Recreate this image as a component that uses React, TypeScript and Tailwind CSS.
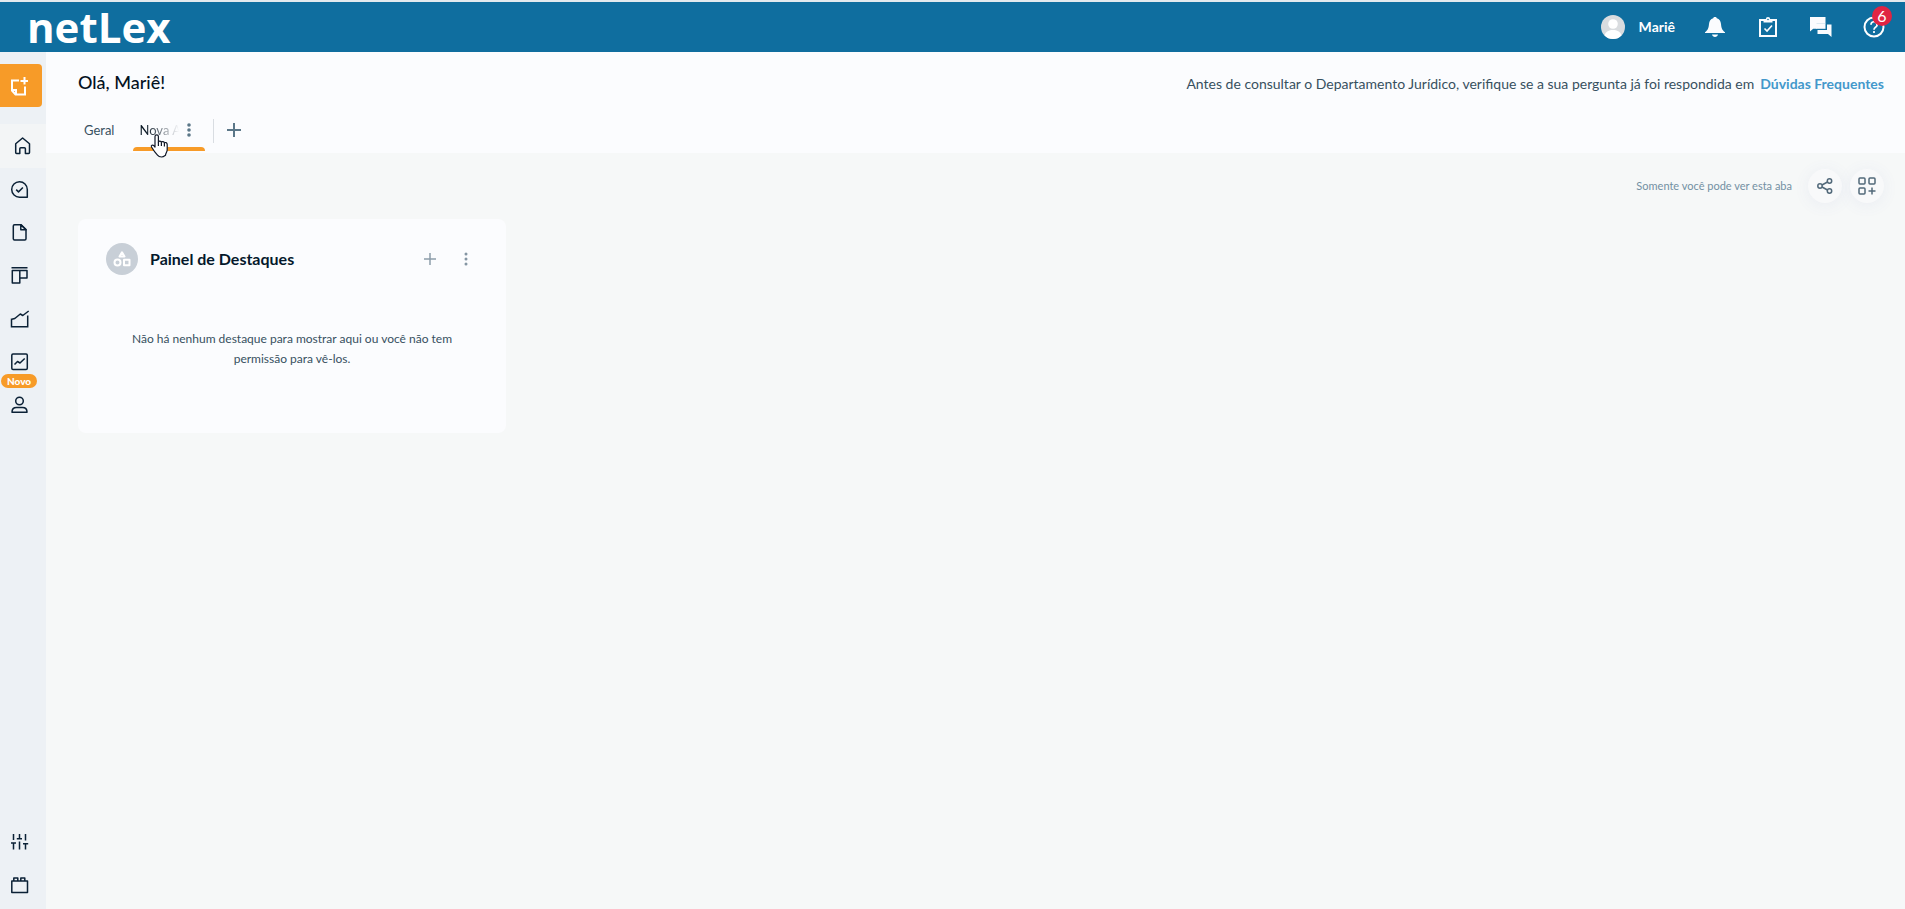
import React from "react";

type IconProps = { className?: string; children: React.ReactNode; size?: number; box?: number; sw?: number };

function Line({ className = "", children, size = 20, box, sw = 1.5 }: IconProps) {
  const b = box ?? size;
  return (
    <svg
      width={size}
      height={size}
      viewBox={`0 0 ${b} ${b}`}
      fill="none"
      stroke="currentColor"
      strokeWidth={sw}
      strokeLinejoin="round"
      className={"shrink-0 " + className}
      aria-hidden="true"
    >
      {children}
    </svg>
  );
}

function NavItem({ label, children, badge }: { label: string; children: React.ReactNode; badge?: string }) {
  return (
    <a href="#" aria-label={label} className="relative flex h-[43px] items-center pl-[10px] text-[#0b2136]">
      {children}
      {badge && (
        <span className="absolute top-[34px] left-px z-10 rounded-full bg-[#f79b28] px-1.5 text-[10px] leading-[14px] font-black text-white">
          {badge}
        </span>
      )}
    </a>
  );
}

function Sidebar() {
  return (
    <nav className="flex w-[46px] shrink-0 flex-col bg-[#edf1f5] pt-3 pb-[3px]">
      <button aria-label="Novo documento" className="flex h-[43px] w-[42px] items-center rounded-r-sm bg-[#f79b28] pl-[10px] text-white">
        <Line sw={2}>
          <path d="M9 4.500H2v10l3.500 4H15v-8M2 14h4v4.500" strokeLinejoin="miter" />
          <path d="M14.500 1v7.500M10.500 5h7.500" />
        </Line>
      </button>
      <a href="#" aria-label="Início" className="mt-[17px] flex h-11 items-center bg-[#f3f5f6] pl-[13px] text-[#0b2136]">
        <Line>
          <path d="M2.700 7.800 9.600 2l6.900 5.800v8.700a.9.900 0 0 1-.9.900h-3.200v-4.600a1 1 0 0 0-1-1H7.800a1 1 0 0 0-1 1v4.600H3.600a.9.900 0 0 1-.9-.9z" />
        </Line>
      </a>
      <NavItem label="Tarefas">
        <Line>
          <path d="M17.300 9.500v7.800H9.600A7.800 7.800 0 1 1 17.300 9.500z" />
          <path d="m6.200 9.600 2.300 2.300 4.400-4.400" />
        </Line>
      </NavItem>
      <NavItem label="Documentos">
        <Line>
          <path d="M11.200 1.800H4.500a1.200 1.200 0 0 0-1.200 1.200v12.800a1.200 1.200 0 0 0 1.200 1.200h10.300a1.200 1.200 0 0 0 1.200-1.200V6.600z" />
          <path d="M10.800 1.800v5H16z" />
        </Line>
      </NavItem>
      <NavItem label="Quadros">
        <Line>
          <path d="M1.500 1.800h16M2.300 4.600h7.500v12.500H2.300zM9.800 4.600h7.200v7.500H9.800z" />
        </Line>
      </NavItem>
      <NavItem label="Indicadores">
        <Line>
          <path d="M1.500 11v6.700h16.200V6.500" strokeLinejoin="miter" />
          <path d="m.8 10.500 4-1 5.500-4.500 2.500 1.500L18.700 2" />
        </Line>
      </NavItem>
      <NavItem label="Relatórios" badge="Novo">
        <Line>
          <rect x="1.800" y="2" width="15.500" height="15.500" rx="1.200" />
          <path d="m4.500 12.500 3-3 2.500 1.500 4.700-4.500" />
        </Line>
      </NavItem>
      <NavItem label="Usuários">
        <Line>
          <circle cx="9.500" cy="6" r="3.800" />
          <path d="M2 17.200c0-3.200 1.800-4.700 4.500-4.700h6c2.700 0 4.500 1.500 4.500 4.700z" />
        </Line>
      </NavItem>
      <div className="mt-auto">
        <NavItem label="Configurações">
          <Line>
            <path d="M3.500 2v6M3.500 11v6.500M1 11h5M9.500 2v4.800M6.800 6.800H12M9.500 9.500v8M15.500 2v6.500M15.500 11.800v5.700M13 11.800h5.200" />
          </Line>
        </NavItem>
        <NavItem label="Integrações">
          <Line>
            <path d="M1.800 6h15.700v11.500H1.800zM3.800 6V3h4v3M10.800 6V3h4v3" />
          </Line>
        </NavItem>
      </div>
    </nav>
  );
}

function TopBar() {
  return (
    <header className="flex h-[52px] shrink-0 items-center justify-between border-t-2 border-[#e3eaee] bg-[#0f6e9f] pr-5 pl-[27px] text-white">
      <a href="#" className="font-['Open_Sans',sans-serif] text-[42px] leading-[50px] font-bold">
        netLex
      </a>
      <div className="flex items-center">
        <a href="#" className="flex items-center text-sm font-bold">
          <svg width="24" height="24" viewBox="0 0 24 24" className="mr-[14px]" aria-hidden="true">
            <circle cx="12" cy="12" r="12" fill="#d9dcdf" />
            <circle cx="12" cy="9" r="4.800" fill="#fff" />
            <path d="M3.500 20.400c1.200-4 4.500-5.400 8.500-5.400s7.300 1.400 8.500 5.400A12 12 0 0 1 12 24a12 12 0 0 1-8.500-3.600z" fill="#fff" />
          </svg>
          Mariê
        </a>
        <button aria-label="Notificações" className="ml-[30px]">
          <svg width="20" height="20" viewBox="0 0 20 20" fill="#fbfcfe" aria-hidden="true">
            <path d="M10 0c1 0 1.600.5 1.800 1.200 2.600.6 3.900 2.900 4.200 5.800.4 4 1 6 4 8.300V16H0v-.7C3 13 3.600 11 4 7c.3-2.900 1.600-5.200 4.200-5.800C8.400.5 9 0 10 0zM7 17.500h6c-.3 1.600-1.500 2.500-3 2.500s-2.700-.9-3-2.500z" />
          </svg>
        </button>
        <button aria-label="Tarefas pendentes" className="ml-[34px]">
          <svg width="18" height="20" viewBox="0 0 18 20" fill="none" stroke="#fbfcfe" strokeWidth="2" aria-hidden="true">
            <path d="M1 3h16v16H1z" />
            <path d="M4.500 2h9v3.500h-9z" fill="#fbfcfe" stroke="none" />
            <circle cx="9" cy="2.200" r="2.200" fill="#fbfcfe" stroke="none" />
            <circle cx="9" cy="2.500" r=".8" fill="#0f6e9f" stroke="none" />
            <path d="m5.500 11.500 2.500 2.500 5-5.500" strokeWidth="1.600" />
          </svg>
        </button>
        <button aria-label="Mensagens" className="ml-[33px]">
          <svg width="22" height="20" viewBox="0 0 22 20" fill="#fbfcfe" aria-hidden="true">
            <path d="M0 0h15.500v6.800H6.500v5H3.200L0 14.500z" />
            <path d="M17 7.500h4.500V20l-3.500-3H7.500v-4H17z" />
            <path d="M6 6.500h9.500v5.300H6z" />
          </svg>
        </button>
        <button aria-label="Ajuda" className="relative ml-[31px]">
          <Line size={22} sw={2}>
            <circle cx="11" cy="11" r="9.500" />
            <path d="M8 8.800a3 3 0 1 1 4.500 2.500c-1 .7-1.500 1.200-1.500 2.400M11 15v2" strokeWidth="1.700" />
          </Line>
          <span className="absolute -top-[10px] -right-[7px] flex size-5 items-center justify-center rounded-full bg-[#e02443] text-base leading-5">6</span>
        </button>
      </div>
    </header>
  );
}

function PageHead() {
  return (
    <div className="flex h-[101px] justify-between bg-[#fbfcfe] pr-[21px]">
      <div className="flex flex-col justify-between">
        <h1 className="pt-[18px] pl-8 text-[18px] leading-6 font-medium text-[#04121f]">Olá, Mariê!</h1>
        <div className="flex h-[46px] items-start pl-[38px] text-[13px] leading-5 text-[#37505f]">
          <button className="mt-[13px] h-5">Geral</button>
          <div className="relative ml-[19px] flex h-11 w-[72px] items-start pt-[13px] pl-1.5">
            <button className="h-5 w-10 bg-gradient-to-r from-[#04121f] from-15% to-transparent bg-clip-text text-left whitespace-nowrap text-transparent">
              Nova A
            </button>
            <button aria-label="Opções da aba" className="ml-2 flex h-5 items-center text-[#5b7788]">
              <svg width="4" height="14" viewBox="0 0 4 14" fill="currentColor" aria-hidden="true">
                <circle cx="2" cy="2" r="1.800" /><circle cx="2" cy="7" r="1.800" /><circle cx="2" cy="12" r="1.800" />
              </svg>
            </button>
            <span className="absolute inset-x-0 bottom-0 h-1 rounded-t bg-[#f79b28]" />
            <svg width="20" height="24" viewBox="0 0 20 24" className="absolute top-[27px] left-[17px] z-10" aria-hidden="true">
              <path
                d="M5 2.500a1.700 1.700 0 0 1 3.400 0V8c.3-1.300 2.700-1.200 3 .3.500-1 2.700-.8 3 .7.700-1 2.800-.4 2.800 1.500v5.500c0 2-1.700 3.500-1.700 5.200C14 22.300 13 23 11.500 23s-3-.5-4-1.800C6 19.500 3 15.500 1.500 13c-.8-1.600 1.200-2.600 2.300-1.400L5 13z"
                fill="#fff" stroke="#111827" strokeWidth="1.200" strokeLinejoin="round"
              />
              <path d="M8.400 8v4M11.400 8.500v3.500M14.400 9v3.500" stroke="#111827" strokeWidth="1.200" />
            </svg>
          </div>
          <div className="mt-3 ml-2 h-6 w-px bg-[#d9dde2]" />
          <button aria-label="Adicionar aba" className="mt-4 ml-[13px] text-[#5b7788]">
            <Line size={14} sw={2}><path d="M7 0v14M0 7h14" /></Line>
          </button>
        </div>
      </div>
      <p className="pt-[22px] text-sm leading-5 text-[#37505f]">
        Antes de consultar o Departamento Jurídico, verifique se a sua pergunta já foi respondida em
        <a href="#" className="ml-1.5 font-bold text-[#4398cb]">Dúvidas Frequentes</a>
      </p>
    </div>
  );
}

function HighlightCard() {
  return (
    <section className="flex h-[214px] w-[428px] flex-col rounded-lg bg-[#fbfcfe] px-7 pt-6">
      <div className="flex items-center">
        <span className="flex size-8 items-center justify-center rounded-full bg-[#c8cfd7] text-white">
          <Line size={18} sw={2}>
            <path d="M9 2.300 11.500 6.500H6.500z" />
            <circle cx="4.500" cy="12.500" r="3" />
            <path d="M11 9.800h5.500v5.500H11z" />
          </Line>
        </span>
        <h2 className="ml-3 text-base font-bold text-[#04182b]">Painel de Destaques</h2>
        <button aria-label="Adicionar" className="ml-auto text-[#8d9dab]">
          <Line size={12}><path d="M6 0v12M0 6h12" /></Line>
        </button>
        <button aria-label="Mais opções" className="mr-[10px] ml-7 text-[#8495a3]">
          <svg width="4" height="14" viewBox="0 0 4 14" fill="currentColor" aria-hidden="true">
            <circle cx="2" cy="2" r="1.500" /><circle cx="2" cy="7" r="1.500" /><circle cx="2" cy="12" r="1.500" />
          </svg>
        </button>
      </div>
      <p className="mt-[54px] px-6 text-center text-xs leading-5 text-[#37505f]">
        Não há nenhum destaque para mostrar aqui ou você não tem permissão para vê-los.
      </p>
    </section>
  );
}

export default function App() {
  return (
    <div className="flex min-h-screen flex-col font-[Lato,sans-serif]">
      <TopBar />
      <div className="flex flex-1">
        <Sidebar />
        <main className="flex-1 bg-[#f6f8f8]">
          <PageHead />
          <div className="flex h-[66px] items-center justify-end pr-[21px]">
            <span className="mr-4 text-[11px] text-[#7390a3]">Somente você pode ver esta aba</span>
            <button aria-label="Compartilhar" className="mr-2 flex size-[34px] items-center justify-center rounded-full bg-[#f8f9fa] text-[#52697a] shadow-[0_2px_16px_rgba(90,100,180,0.08)]">
              <Line size={16}>
                <circle cx="3" cy="8" r="2.200" /><circle cx="12.500" cy="3" r="2.200" /><circle cx="12.500" cy="13" r="2.200" />
                <path d="m5 7 5.500-3M5 9l5.500 3" />
              </Line>
            </button>
            <button aria-label="Adicionar painel" className="flex size-[34px] items-center justify-center rounded-full bg-[#f8f9fa] text-[#52697a] shadow-[0_2px_16px_rgba(90,100,180,0.08)]">
              <Line size={18}>
                <rect x="1" y="1" width="6" height="6" rx="1" /><rect x="11" y="1" width="6" height="6" rx="1" /><rect x="1" y="11" width="6" height="6" rx="1" />
                <path d="M14 10.500v7M10.500 14h7" />
              </Line>
            </button>
          </div>
          <div className="pl-8">
            <HighlightCard />
          </div>
        </main>
      </div>
    </div>
  );
}
